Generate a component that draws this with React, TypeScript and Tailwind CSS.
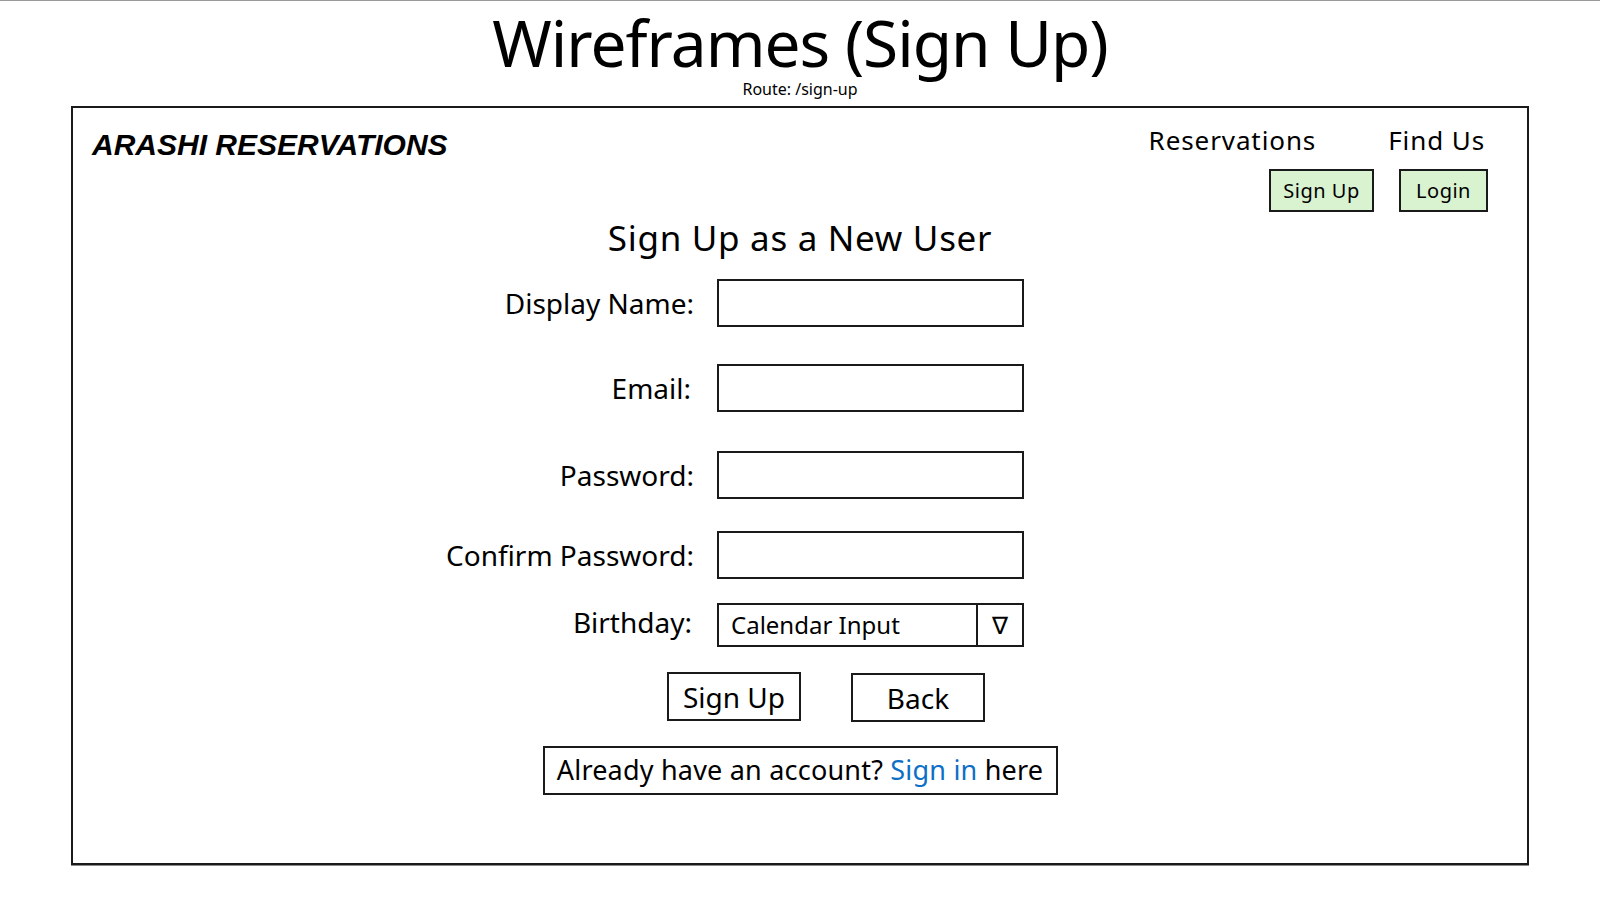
import React from "react";

const F = { fontFamily: '"Noto Sans", "Open Sans", sans-serif' };

function Field({ label, mt, pr = "" }: { label: string; mt: string; pr?: string }) {
  return (
    <div className={`flex items-center ${mt}`}>
      <div className={`w-[621px] text-right text-[28px] leading-none text-black ${pr}`}>{label}</div>
      <div className="ml-[23px] w-[307px] h-[48px] border-2 border-[#1a1a1a] bg-white" />
    </div>
  );
}

export default function App() {
  return (
    <div className="w-[1600px] h-[899px] bg-white border-t border-[#9a9a9a] overflow-hidden" style={F}>
      <div className="flex flex-col items-center">
        <h1 className="text-[64px] leading-none mt-[10px] text-black tracking-[-1px]">Wireframes (Sign Up)</h1>
        <div className="text-[16px] leading-none mt-[6px] text-black">Route: /sign-up</div>
      </div>

      <div className="ml-[71px] mt-[9px] w-[1458px] h-[759px] border-2 border-[#1a1a1a] shadow-[0_1px_0_#8a8a8a]">
        <div className="flex justify-between">
          <div
            className="ml-[19px] mt-[22px] text-[30px] font-bold italic leading-none text-black"
            style={{ fontFamily: '"Liberation Sans", Arial, sans-serif' }}
          >
            ARASHI RESERVATIONS
          </div>
          <div className="mr-[39px] mt-[19px] flex flex-col items-end">
            <div className="flex gap-[72px] text-[26px] leading-none tracking-[0.9px] text-black">
              <span>Reservations</span>
              <span className="mr-[3px]">Find Us</span>
            </div>
            <div className="mt-[16px] flex gap-[25px]">
              <div className="w-[105px] h-[43px] bg-[#d9f2d0] border-2 border-[#1a1a1a] flex items-center justify-center text-[20px] tracking-[0.5px]">
                Sign Up
              </div>
              <div className="w-[89px] h-[43px] bg-[#d9f2d0] border-2 border-[#1a1a1a] flex items-center justify-center text-[20px] tracking-[0.5px]">
                Login
              </div>
            </div>
          </div>
        </div>

        <div className="mt-[8px] text-center text-[35px] leading-none tracking-[0.7px] text-black">
          Sign Up as a New User
        </div>

        <Field label="Display Name:" mt="mt-[24px]" />
        <Field label="Email:" mt="mt-[37px]" pr="pr-[3px]" />
        <Field label="Password:" mt="mt-[39px]" />
        <Field label="Confirm Password:" mt="mt-[32px]" />

        <div className="flex items-center mt-[24px]">
          <div className="w-[621px] text-right text-[28px] leading-none text-black -mt-[6px] pr-[2px]">Birthday:</div>
          <div className="ml-[23px] w-[307px] h-[44px] border-2 border-[#1a1a1a] flex">
            <div className="flex-1 flex items-center pl-[12px] text-[24px] text-black">Calendar Input</div>
            <div className="w-[46px] border-l-2 border-[#1a1a1a] flex items-center justify-center text-[24px] text-black">
              ∇
            </div>
          </div>
        </div>

        <div className="flex mt-[25px] ml-[594px] gap-[50px]">
          <div className="w-[134px] h-[49px] border-2 border-[#1a1a1a] flex items-center justify-center text-[28px] text-black">
            Sign Up
          </div>
          <div className="w-[134px] h-[49px] mt-[1px] border-2 border-[#1a1a1a] flex items-center justify-center text-[28px] text-black">
            Back
          </div>
        </div>

        <div className="flex justify-center mt-[24px]">
          <div className="w-[515px] h-[49px] border-2 border-[#1a1a1a] flex items-center justify-center text-[27px] tracking-[0.2px] text-black">
            Already have an account?&nbsp;<span className="text-[#0f6fc6]">Sign in</span>&nbsp;here
          </div>
        </div>
      </div>
    </div>
  );
}
